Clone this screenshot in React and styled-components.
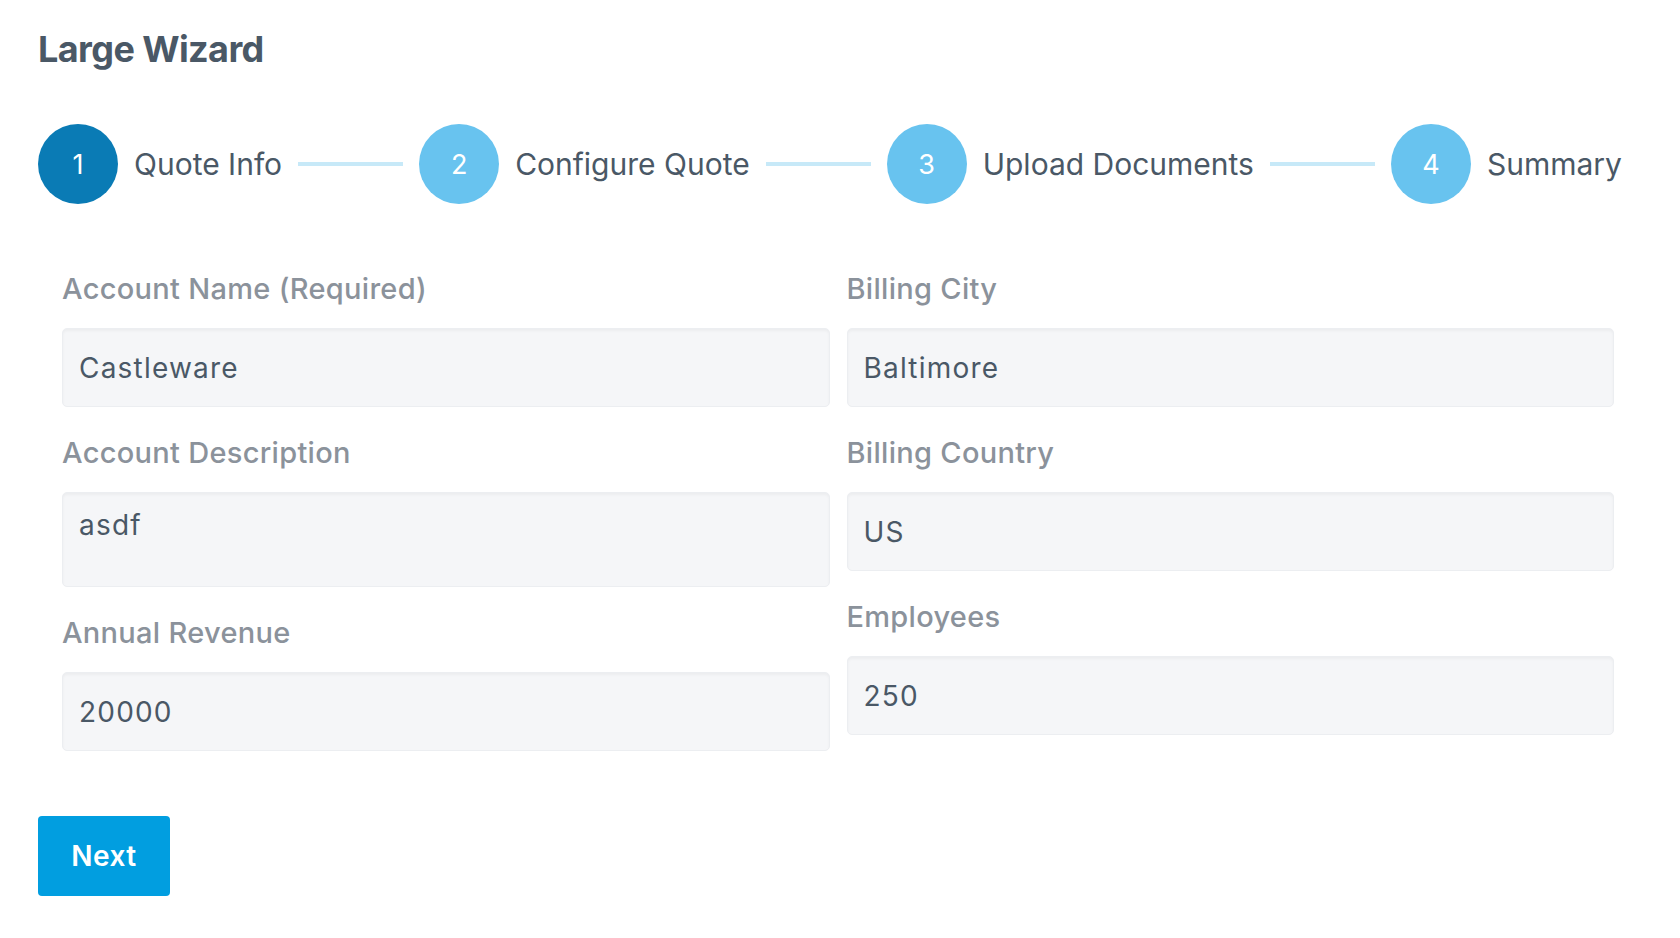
import React from "react";
import styled, { createGlobalStyle } from "styled-components";

const GlobalStyle = createGlobalStyle`
  html, body { margin: 0; padding: 0; background: #ffffff; }
  body { font-family: "Inter", "Open Sans", sans-serif; color: #4a5866; }
  * { box-sizing: border-box; }
`;

const Page = styled.div`
  width: 1600px;
  margin-left: 38px;
  padding-top: 26px;
`;

const Title = styled.h1`
  margin: 0;
  font-size: 36px;
  line-height: 46px;
  font-weight: 700;
  color: #4a5866;
  letter-spacing: -0.6px;
`;

const Stepper = styled.div`
  display: flex;
  align-items: center;
  margin-top: 52px;
  height: 80px;
`;

const Step = styled.div`
  display: flex;
  align-items: center;
  gap: 16px;
`;

const Circle = styled.div`
  width: 80px;
  height: 80px;
  border-radius: 50%;
  background: ${(p) => (p.$active ? "#0a7bb5" : "#68c3ef")};
  color: #ffffff;
  display: flex;
  align-items: center;
  justify-content: center;
  font-size: 27px;
  font-weight: 400;
`;

const StepLabel = styled.span`
  font-size: 30px;
  font-weight: 400;
  color: #4a5866;
  white-space: nowrap;
`;

const Connector = styled.div`
  width: 105px;
  height: 4px;
  background: #c7e9f8;
  margin: 0 16px;
`;

const Form = styled.div`
  display: grid;
  grid-template-columns: 1fr 1fr;
  column-gap: 17px;
  padding: 0 24px;
  margin-top: 65px;
  align-items: start;
`;

const Column = styled.div`
  display: flex;
  flex-direction: column;
  gap: 26px;
`;

const Field = styled.div`
  display: flex;
  flex-direction: column;
`;

const Label = styled.label`
  font-size: 29px;
  line-height: 40px;
  font-weight: 500;
  color: #8b929b;
  margin-bottom: 19px;
  letter-spacing: 0.3px;
`;

const Input = styled.input`
  height: 79px;
  width: 100%;
  border: 1px solid #eceef1;
  border-radius: 5px;
  background: #f5f6f8;
  box-shadow: inset 0 2px 3px rgba(0, 0, 0, 0.04);
  padding: 0 16px;
  font-family: "Inter", "Open Sans", sans-serif;
  font-size: 28px;
  letter-spacing: 1.2px;
  color: #4a5866;
  outline: none;
`;

const TextArea = styled.textarea`
  height: 95px;
  width: 100%;
  border: 1px solid #eceef1;
  border-radius: 5px;
  background: #f5f6f8;
  box-shadow: inset 0 2px 3px rgba(0, 0, 0, 0.04);
  padding: 14px 16px;
  font-family: "Inter", "Open Sans", sans-serif;
  font-size: 28px;
  letter-spacing: 1.2px;
  line-height: 36px;
  color: #4a5866;
  resize: none;
  outline: none;
  display: block;
`;

const Actions = styled.div`
  margin-top: 65px;
`;

const NextButton = styled.button`
  width: 132px;
  height: 80px;
  border: none;
  border-radius: 4px;
  background: #019ee0;
  color: #ffffff;
  font-family: "Inter", "Open Sans", sans-serif;
  font-size: 28px;
  letter-spacing: 0.5px;
  font-weight: 600;
  cursor: pointer;
`;

const steps = ["Quote Info", "Configure Quote", "Upload Documents", "Summary"];

export default function App() {
  return (
    <>
      <GlobalStyle />
      <Page>
        <Title>Large Wizard</Title>
        <Stepper>
          {steps.map((s, i) => (
            <React.Fragment key={s}>
              <Step>
                <Circle $active={i === 0}>{i + 1}</Circle>
                <StepLabel>{s}</StepLabel>
              </Step>
              {i < steps.length - 1 && <Connector />}
            </React.Fragment>
          ))}
        </Stepper>
        <Form>
          <Column>
            <Field>
              <Label>Account Name (Required)</Label>
              <Input defaultValue="Castleware" />
            </Field>
            <Field>
              <Label>Account Description</Label>
              <TextArea defaultValue="asdf" />
            </Field>
            <Field>
              <Label>Annual Revenue</Label>
              <Input defaultValue="20000" />
            </Field>
          </Column>
          <Column>
            <Field>
              <Label>Billing City</Label>
              <Input defaultValue="Baltimore" />
            </Field>
            <Field>
              <Label>Billing Country</Label>
              <Input defaultValue="US" />
            </Field>
            <Field>
              <Label>Employees</Label>
              <Input defaultValue="250" />
            </Field>
          </Column>
        </Form>
        <Actions>
          <NextButton>Next</NextButton>
        </Actions>
      </Page>
    </>
  );
}
